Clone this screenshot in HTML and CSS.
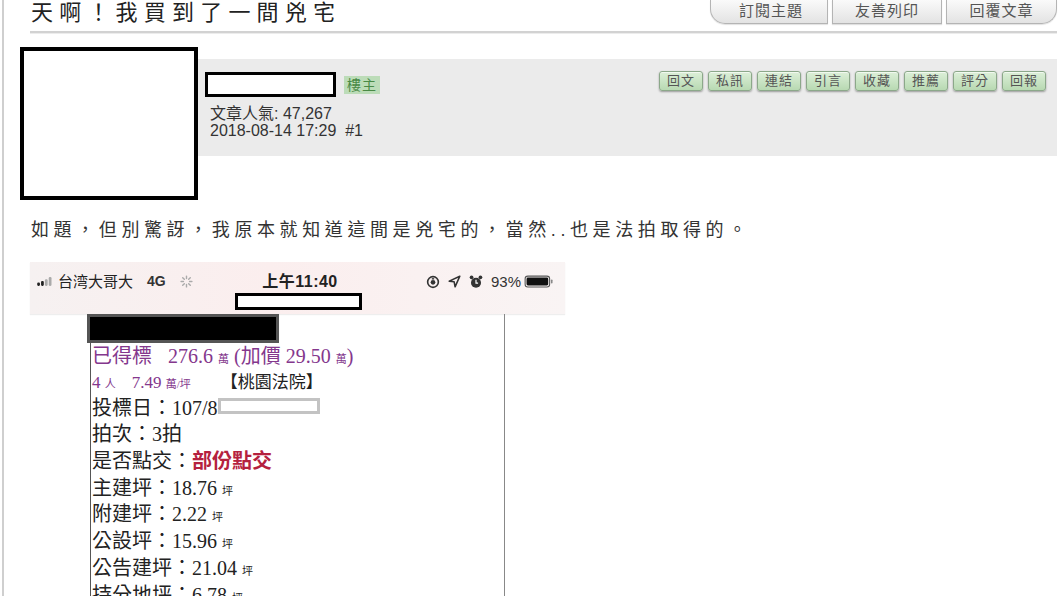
FILE: index.html
```html
<!DOCTYPE html>
<html lang="zh-Hant">
<head>
    <meta charset="UTF-8">
    <meta name="viewport" content="width=device-width, initial-scale=1.0">
    <title>天啊！我買到了一間兇宅</title>
    <link rel="stylesheet" href="styles.css">
</head>
<body>
    <div class="page">
        <div class="topic-head">
            <h1>天啊！我買到了一間兇宅</h1>
            <div class="topic-btns">
                <a class="topic-btn first">訂閱主題</a>
                <a class="topic-btn mid">友善列印</a>
                <a class="topic-btn last">回覆文章</a>
            </div>
        </div>

        <div class="post-head">
            <div class="avatar"></div>
            <div class="post-info">
                <div class="author">
                    <div class="author-row">
                        <span class="name-mask"></span>
                        <span class="owner-tag">樓主</span>
                    </div>
                    <div class="stats">文章人氣: 47,267</div>
                    <div class="stats">2018-08-14 17:29&nbsp;&nbsp;#1</div>
                </div>
                <div class="actions">
                    <a class="act-btn">回文</a>
                    <a class="act-btn">私訊</a>
                    <a class="act-btn">連結</a>
                    <a class="act-btn">引言</a>
                    <a class="act-btn">收藏</a>
                    <a class="act-btn">推薦</a>
                    <a class="act-btn">評分</a>
                    <a class="act-btn">回報</a>
                </div>
            </div>
        </div>

        <p class="post-text">如題，但別驚訝，我原本就知道這間是兇宅的，當然..也是法拍取得的。</p>

        <div class="phone">
            <div class="status-bar">
                <div class="status-row">
                    <div class="status-left">
                        <svg width="18" height="11" viewBox="0 0 16 10">
                            <rect x="0" y="6" width="2.5" height="3" rx="1" fill="#222"/>
                            <rect x="3.5" y="4.5" width="2.5" height="4.5" rx="1" fill="#222"/>
                            <rect x="7" y="3" width="2.5" height="6" rx="1" fill="#aaa"/>
                            <rect x="10.5" y="1" width="2.5" height="8" rx="1" fill="#aaa"/>
                        </svg>
                        <span>台湾大哥大</span>
                        <span class="net">4G</span>
                        <svg width="13" height="13" viewBox="0 0 12 12" stroke="#aaa" stroke-width="1.3" stroke-linecap="round">
                            <path d="M6 1v2.2M6 8.8V11M1 6h2.2M8.8 6H11M2.5 2.5l1.5 1.5M8 8l1.5 1.5M2.5 9.5L4 8M8 4l1.5-1.5"/>
                        </svg>
                    </div>
                    <div class="status-time">上午11:40</div>
                    <div class="status-right">
                        <svg width="14" height="14" viewBox="0 0 12 12">
                            <circle cx="6" cy="6" r="4.6" fill="none" stroke="#333" stroke-width="1.4"/>
                            <circle cx="6" cy="6.3" r="2" fill="#333"/>
                            <path d="M5 3.3h2" stroke="#333" stroke-width="1.2"/>
                        </svg>
                        <svg width="13" height="13" viewBox="0 0 11 11">
                            <path d="M10 1L1 5.2l4.2 0.6L6 10z" fill="none" stroke="#333" stroke-width="1.3" stroke-linejoin="round"/>
                        </svg>
                        <svg width="14" height="14" viewBox="0 0 12 12">
                            <circle cx="6" cy="6.6" r="4.3" fill="#333"/>
                            <circle cx="2.2" cy="2" r="1.6" fill="#333"/>
                            <circle cx="9.8" cy="2" r="1.6" fill="#333"/>
                            <path d="M6 4v3h1.8" stroke="#fff" stroke-width="1" fill="none"/>
                        </svg>
                        <span>93%</span>
                        <svg width="32" height="13" viewBox="0 0 27 12">
                            <rect x="0.7" y="1" width="22.6" height="10" rx="2.5" fill="none" stroke="#555" stroke-width="1"/>
                            <rect x="2" y="2.3" width="20" height="7.4" rx="1.3" fill="#111"/>
                            <rect x="24.5" y="4.2" width="1.5" height="3.6" rx="0.7" fill="#888"/>
                        </svg>
                    </div>
                </div>
                <div class="url-mask"></div>
            </div>
            <div class="listing">
                <div class="title-mask"></div>
                <div class="line big purple">已得標<span class="sp"></span>276.6 <small>萬</small> (加價 29.50 <small>萬</small>)</div>
                <div class="line mid"><span class="purple">4 <small>人</small><span class="sp"></span>7.49 <small>萬/坪</small></span><span class="sp2"></span>【桃園法院】</div>
                <div class="line big">投標日：107/8<span class="date-mask"></span></div>
                <div class="line big">拍次：3拍</div>
                <div class="line big">是否點交：<b class="red">部份點交</b></div>
                <div class="line big">主建坪：18.76 <small>坪</small></div>
                <div class="line big">附建坪：2.22 <small>坪</small></div>
                <div class="line big">公設坪：15.96 <small>坪</small></div>
                <div class="line big">公告建坪：21.04 <small>坪</small></div>
                <div class="line big">持分地坪：6.78 <small>坪</small></div>
            </div>
        </div>
    </div>
</body>
</html>
```

FILE: styles.css
```css
body {
    margin: 0;
    background: #fff;
    font-family: "Liberation Sans", "Noto Sans CJK TC", sans-serif;
    color: #333;
    overflow: hidden;
}
.page {
    margin-left: 2px;
    border-left: 2px solid #cfcfcf;
    height: 596px;
    padding-right: 3px;
}
.topic-head {
    display: flex;
    justify-content: space-between;
    align-items: flex-start;
    margin-left: 26px;
    height: 31px;
    border-bottom: 2px solid #d2d2d2;
    box-shadow: 0 1px 0 #ececec;
}
h1 {
    margin: 0;
    font-size: 22px;
    line-height: 25px;
    font-weight: normal;
    letter-spacing: 6.2px;
    color: #222;
    padding-left: 1px;
}
.topic-btns {
    display: flex;
    gap: 4px;
}
.topic-btn {
    display: block;
    width: 108px;
    height: 23px;
    line-height: 21px;
    text-align: center;
    border: 1px solid #b4b4b4;
    border-top: none;
    background: linear-gradient(#fafafa, #e3e3e3);
    box-shadow: 0 1px 1px rgba(0, 0, 0, 0.12);
    font-size: 15px;
    letter-spacing: 1px;
    color: #555;
}
.topic-btn.first {
    width: 112px;
    padding-left: 4px;
    border-radius: 0 0 0 15px;
}
.topic-btn.last {
    width: 109px;
    border-radius: 0 0 15px 0;
}
.post-head {
    display: flex;
    align-items: flex-start;
    margin-top: 14px;
    margin-left: 16px;
}
.avatar {
    width: 170px;
    height: 145px;
    border: 4px solid #000;
    background: #fff;
    flex-shrink: 0;
}
.post-info {
    flex: 1;
    margin-top: 12px;
    height: 97px;
    background: #ebebeb;
    display: flex;
    justify-content: space-between;
    align-items: flex-start;
}
.author {
    padding: 13px 0 0 7px;
}
.author-row {
    display: flex;
    align-items: center;
    gap: 8px;
    margin-bottom: 8px;
}
.name-mask {
    width: 125px;
    height: 19px;
    border: 3px solid #000;
    background: #fff;
}
.owner-tag {
    background: #bcdcb8;
    color: #4a8a46;
    font-size: 14px;
    line-height: 18px;
    padding: 0 3px;
    letter-spacing: 1px;
}
.stats {
    font-size: 16px;
    line-height: 17px;
    color: #333;
    padding-left: 5px;
}
.actions {
    display: flex;
    gap: 5px;
    padding: 12px 11px 0 0;
}
.act-btn {
    display: block;
    width: 42px;
    height: 18px;
    line-height: 18px;
    text-align: center;
    border: 1px solid #8ca88a;
    border-radius: 3px;
    background: linear-gradient(#dcefd8, #b8d9b2);
    box-shadow: 0 1px 2px rgba(0, 0, 0, 0.35), inset 0 1px 0 rgba(255, 255, 255, 0.6);
    font-size: 13px;
    letter-spacing: 1px;
    color: #555;
}
.post-text {
    margin: 17px 0 0 27px;
    font-size: 18px;
    line-height: 26px;
    letter-spacing: 4.6px;
    color: #333;
}
.phone {
    margin: 19px 0 0 26px;
    width: 535px;
}
.status-bar {
    height: 52px;
    background: linear-gradient(to right, #f6f1f1, #fbeeee 45%, #f9f4f4);
    box-shadow: 0 1px 1px #eee;
}
.status-row {
    display: grid;
    grid-template-columns: 1fr auto 1fr;
    align-items: center;
    padding: 11px 10px 0 7px;
    font-size: 15px;
    line-height: 17px;
    color: #222;
}
.status-left {
    display: flex;
    align-items: center;
    gap: 3px;
}
.status-left .net {
    margin: 0 11px 0 11px;
    font-weight: bold;
    font-size: 14px;
    color: #333;
}
.status-time {
    font-weight: bold;
    font-size: 16px;
    letter-spacing: 0.5px;
    padding-left: 8px;
}
.status-right {
    display: flex;
    align-items: center;
    justify-content: flex-end;
    gap: 8px;
}
.status-right span {
    margin-right: -6px;
    color: #333;
}
.url-mask {
    width: 121px;
    height: 11px;
    border: 3px solid #000;
    background: #fff;
    margin: 3px 0 0 205px;
}
.listing {
    margin-left: 60px;
    width: 413px;
    height: 300px;
    border-left: 1px solid #555;
    border-right: 1px solid #888;
    font-family: "Liberation Serif", "Noto Sans CJK TC", serif;
    color: #222;
}
.title-mask {
    width: 186px;
    height: 23px;
    margin-left: -4px;
    background: #000;
    border: 3px solid #555;
}
.line {
    padding-left: 1px;
    white-space: nowrap;
}
.line.big {
    font-size: 20px;
    height: 26.7px;
    line-height: 26.7px;
}
.line.mid {
    font-size: 17px;
    height: 24px;
    line-height: 24px;
    margin-top: 1px;
}
.line small {
    font-size: 11px;
}
.purple {
    color: #84378d;
}
.red {
    color: #b5213e;
}
.sp {
    display: inline-block;
    width: 16px;
}
.sp2 {
    display: inline-block;
    width: 30px;
}
.date-mask {
    display: inline-block;
    width: 96px;
    height: 10px;
    border: 3px solid #c3c3c3;
    background: #fff;
    vertical-align: 1px;
}
```
